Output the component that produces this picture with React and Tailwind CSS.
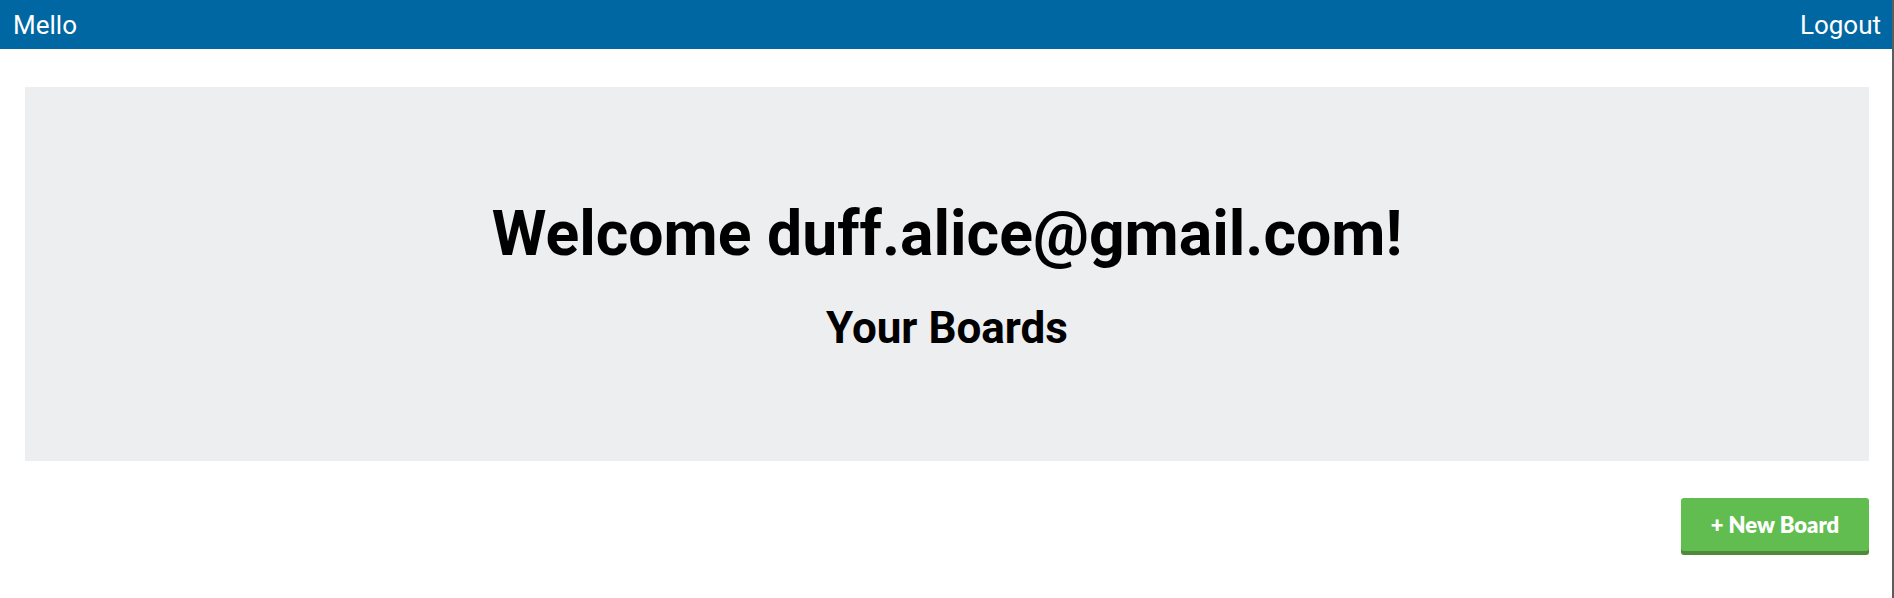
import React from "react";

function Header() {
  return (
    <header className="flex h-[49px] items-center justify-between bg-[#0067a3] pl-[13px] pr-[11px] text-[26px] text-white">
      <a href="#" className="leading-none">Mello</a>
      <a href="#" className="leading-none">Logout</a>
    </header>
  );
}

export default function App() {
  return (
    <div className="min-h-screen border-r-2 border-[#5c5c5c] bg-white font-['Roboto',sans-serif]">
      <Header />
      <main className="pl-[25px] pr-[23px] pt-[38px]">
        <section className="flex flex-col items-center bg-[#edeef0] py-[108px] text-black">
          <h1 className="text-[62.5px] font-bold leading-[77px]">Welcome duff.alice@gmail.com!</h1>
          <h2 className="mt-[31px] text-[44px] font-bold leading-[50px]">Your Boards</h2>
        </section>
        <div className="mt-[37px] flex justify-end">
          <button className="h-[53px] w-[188px] rounded-[3px] bg-[#61bd4f] font-['Lato',sans-serif] text-[22px] font-extrabold text-white shadow-[0_4px_0_#4f8a3a]">
            + New Board
          </button>
        </div>
      </main>
    </div>
  );
}
